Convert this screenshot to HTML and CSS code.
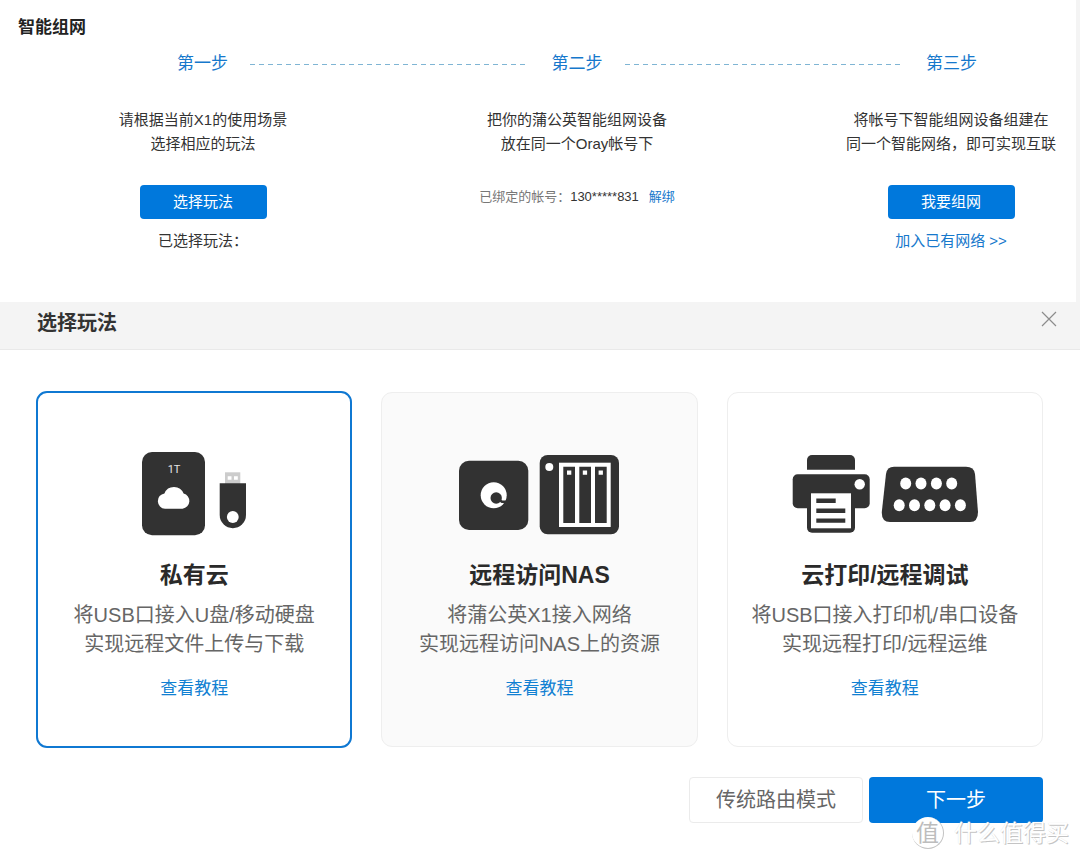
FILE: index.html
```html
<!DOCTYPE html>
<html lang="zh-CN">
<head>
<meta charset="utf-8">
<meta name="viewport" content="width=device-width, initial-scale=1">
<title>智能组网</title>
<link rel="stylesheet" href="styles.css">
</head>
<body>
<section class="network">
  <h1 class="network-title">智能组网</h1>
  <div class="step-bar">
    <span>第一步</span>
    <span class="step-line"></span>
    <span>第二步</span>
    <span class="step-line"></span>
    <span>第三步</span>
  </div>
  <div class="steps">
    <div class="step">
      <p class="step-text">请根据当前X1的使用场景<br>选择相应的玩法</p>
      <button class="button button-small" type="button">选择玩法</button>
      <p class="step-note">已选择玩法：</p>
    </div>
    <div class="step">
      <p class="step-text">把你的蒲公英智能组网设备<br>放在同一个Oray帐号下</p>
      <p class="account"><span class="account-label">已绑定的帐号：</span><span>130*****831</span><a class="account-link" href="#">解绑</a></p>
    </div>
    <div class="step">
      <p class="step-text">将帐号下智能组网设备组建在<br>同一个智能网络，即可实现互联</p>
      <button class="button button-small" type="button">我要组网</button>
      <a class="step-note" href="#">加入已有网络 &gt;&gt;</a>
    </div>
  </div>
</section>

<section class="dialog">
  <header class="dialog-header">
    <h2 class="dialog-title">选择玩法</h2>
    <button class="close" type="button" aria-label="关闭">
      <svg width="16" height="16" viewBox="0 0 16 16"><path d="M1 1L15 15M15 1L1 15" stroke="#8c8c8c" stroke-width="1.2" fill="none"/></svg>
    </button>
  </header>

  <div class="cards">
    <article class="card card-selected">
      <svg class="card-icon" width="105" height="84" viewBox="0 0 105 84" fill="#323232" aria-hidden="true">
        <rect width="63" height="83.3" rx="10"/>
        <text class="disk-label" x="32" y="21" text-anchor="middle" fill="#e6e6e6">1T</text>
        <path d="M23 56.7a7.7 7.7 0 0 1-.6-15.3A10.3 10.3 0 0 1 41.6 41.6A7.7 7.7 0 0 1 40.6 56.7Z" fill="#fff"/>
        <rect x="83" y="20.3" width="15.3" height="12" fill="#ccc"/>
        <path d="M85.7 24.3h3.8v3.5h-3.8zM92 24.3h3.8v3.5H92z" fill="#fff"/>
        <path d="M77.7 31.3H104V63a13.15 13.15 0 0 1-26.3 0Z"/>
        <circle cx="90.8" cy="65" r="5.9" fill="#fff"/>
      </svg>
      <h3 class="card-title">私有云</h3>
      <p class="card-text">将USB口接入U盘/移动硬盘<br>实现远程文件上传与下载</p>
      <a class="card-link" href="#">查看教程</a>
    </article>

    <article class="card card-shaded">
      <svg class="card-icon" width="160" height="84" viewBox="0 0 160 84" fill="#323232" aria-hidden="true">
        <rect y="8.7" width="69.3" height="69.3" rx="10"/>
        <circle cx="34.7" cy="43.3" r="13" fill="#fff"/>
        <path d="M39 47L43 49.8L49 49.8" stroke="#323232" stroke-width="2.6" fill="none"/>
        <circle cx="37.2" cy="46" r="5.7"/>
        <rect x="80.7" y="3" width="79.3" height="79.3" rx="8"/>
        <circle cx="90.3" cy="15" r="4" fill="#fff"/>
        <rect x="100" y="10.7" width="51.7" height="64.3" fill="#fff"/>
        <path d="M104.3 14.7H116V71h-11.7zM120.3 14.7H132V71h-11.7zM136 14.7h11.7V71H136z"/>
        <path d="M108 18.4h4.3v4.3H108zM123.8 18.4h4.3v4.3h-4.3zM139.6 18.4h4.3v4.3h-4.3z" fill="#fff"/>
      </svg>
      <h3 class="card-title">远程访问NAS</h3>
      <p class="card-text">将蒲公英X1接入网络<br>实现远程访问NAS上的资源</p>
      <a class="card-link" href="#">查看教程</a>
    </article>

    <article class="card">
      <svg class="card-icon" width="186" height="84" viewBox="0 0 186 84" fill="#323232" aria-hidden="true">
        <path d="M15 17.7V8a5 5 0 0 1 5-5H58a5 5 0 0 1 5 5V17.7Z"/>
        <rect x=".7" y="22.3" width="77" height="34" rx="5"/>
        <path d="M15 40H63V75.7a5 5 0 0 1-5 5H20a5 5 0 0 1-5-5Z"/>
        <circle cx="67.7" cy="32.3" r="5.2" fill="#fff"/>
        <rect x="19" y="41.3" width="40" height="35" fill="#fff"/>
        <path d="M24.3 46.5h19.4v4.6H24.3zM24.3 56.6h29V61h-29zM24.3 66.4h29v4.4h-29z"/>
        <path d="M102 14.7H174Q182 14.7 183 22L186 60Q186 70 178 70H98Q89.500 70 89.800 60L94 22Q95 14.700 102 14.700Z"/>
        <g fill="#fff">
          <ellipse cx="113.7" cy="31.5" rx="5.5" ry="6"/>
          <ellipse cx="129" cy="31.5" rx="5.5" ry="6"/>
          <ellipse cx="144.4" cy="31.5" rx="5.5" ry="6"/>
          <ellipse cx="159.7" cy="31.5" rx="5.5" ry="6"/>
          <ellipse cx="107.2" cy="53.3" rx="5.5" ry="6"/>
          <ellipse cx="122.5" cy="53.3" rx="5.5" ry="6"/>
          <ellipse cx="137.8" cy="53.3" rx="5.5" ry="6"/>
          <ellipse cx="153.1" cy="53.3" rx="5.5" ry="6"/>
          <ellipse cx="168.4" cy="53.3" rx="5.5" ry="6"/>
        </g>
      </svg>
      <h3 class="card-title">云打印/远程调试</h3>
      <p class="card-text">将USB口接入打印机/串口设备<br>实现远程打印/远程运维</p>
      <a class="card-link" href="#">查看教程</a>
    </article>
  </div>

  <footer class="actions">
    <button class="button button-plain" type="button">传统路由模式</button>
    <button class="button button-large" type="button">下一步</button>
  </footer>

  <div class="watermark"><span class="watermark-badge">值</span><span class="watermark-name">什么值得买</span></div>
</section>
</body>
</html>
```

FILE: styles.css
```css
* {
  box-sizing: border-box;
}

body {
  margin: 0;
  background: #fff;
  color: #333;
  font-family: "Liberation Sans", "Noto Sans CJK SC", sans-serif;
  font-size: 15px;
  line-height: 24px;
}

h1, h2, h3, p {
  margin: 0;
}

a {
  color: #1678cc;
  text-decoration: none;
}

button {
  font-family: inherit;
  cursor: pointer;
}

.network {
  padding: 15px 16px 49px 18px;
  border-right: 4px solid #f4f4f4;
}

.network-title {
  font-size: 17px;
  line-height: 26px;
  color: #222;
}

.step-bar {
  display: flex;
  align-items: center;
  margin-top: 11px;
  padding: 0 83px 0 159px;
  color: #1678cc;
  font-size: 17px;
}

.step-line {
  flex: 1;
  height: 1px;
  margin: 0 25px 0 22px;
  background: repeating-linear-gradient(90deg, #7fb5d4 0 5px, transparent 5px 9px);
}

.steps {
  display: flex;
  justify-content: space-between;
  margin-top: 32px;
  padding-left: 76px;
}

.step {
  display: flex;
  flex-direction: column;
  align-items: center;
  width: 218px;
  text-align: center;
}

.step-text {
  margin-bottom: 29px;
  white-space: nowrap;
}

.step-note {
  margin-top: 10px;
}

.account {
  display: flex;
  font-size: 13px;
}

.account-label {
  color: #777;
}

.account-link {
  margin-left: 10px;
}

.button {
  padding: 0 0 3px;
  border: 0;
  border-radius: 4px;
  background: #0078dc;
  color: #fff;
}

.button-small {
  width: 127px;
  height: 34px;
  font-size: 15px;
}

.dialog {
  position: relative;
  padding-bottom: 37px;
}

.dialog-header {
  display: flex;
  justify-content: space-between;
  align-items: flex-start;
  padding: 6px 20px 11px 37px;
  border-bottom: 1px solid #e9e9e9;
  background: #f4f4f4;
}

.dialog-title {
  font-size: 20px;
  line-height: 30px;
}

.close {
  display: flex;
  padding: 3px;
  border: 0;
  background: none;
}

.cards {
  display: grid;
  grid-template-columns: repeat(3, 1fr);
  gap: 29px;
  padding: 42px 37px 0 36px;
}

.card {
  display: flex;
  flex-direction: column;
  align-items: center;
  padding: 59px 10px 44px;
  border: 1px solid #eee;
  border-radius: 11px;
  text-align: center;
}

.card-selected {
  margin: -1px 0;
  border: 2px solid #0f78d2;
}

.card-shaded {
  background: #fafafa;
}

.disk-label {
  font-family: Roboto, sans-serif;
  font-size: 11px;
}

.card-title {
  margin-top: 22px;
  font-size: 23px;
  line-height: 34px;
  color: #2a2a2a;
}

.card-text {
  margin-top: 9px;
  color: #666;
  font-size: 20px;
  line-height: 29px;
}

.card-link {
  margin-top: 17px;
  color: #1080d2;
  font-size: 17px;
  line-height: 26px;
}

.actions {
  display: flex;
  justify-content: flex-end;
  gap: 6px;
  padding: 30px 37px 0;
}

.button-plain,
.button-large {
  width: 174px;
  height: 46px;
  font-size: 20px;
}

.button-plain {
  border: 1px solid #ebebeb;
  background: #fff;
  color: #666;
}

.watermark {
  position: absolute;
  right: 11px;
  bottom: 11px;
  display: flex;
  align-items: center;
  gap: 10px;
  color: #bdbdbd;
  font-size: 23px;
  line-height: 32px;
}

.watermark-badge {
  width: 32px;
  height: 32px;
  border-right: 1px solid #c4c4c4;
  border-bottom: 1px solid #c4c4c4;
  border-radius: 50%;
  background: #fff;
  text-align: center;
}

.watermark-name {
  color: #fff;
  text-shadow: 1px 1px 0 #c4c4c4, 0 0 1px #ddd;
}
```
